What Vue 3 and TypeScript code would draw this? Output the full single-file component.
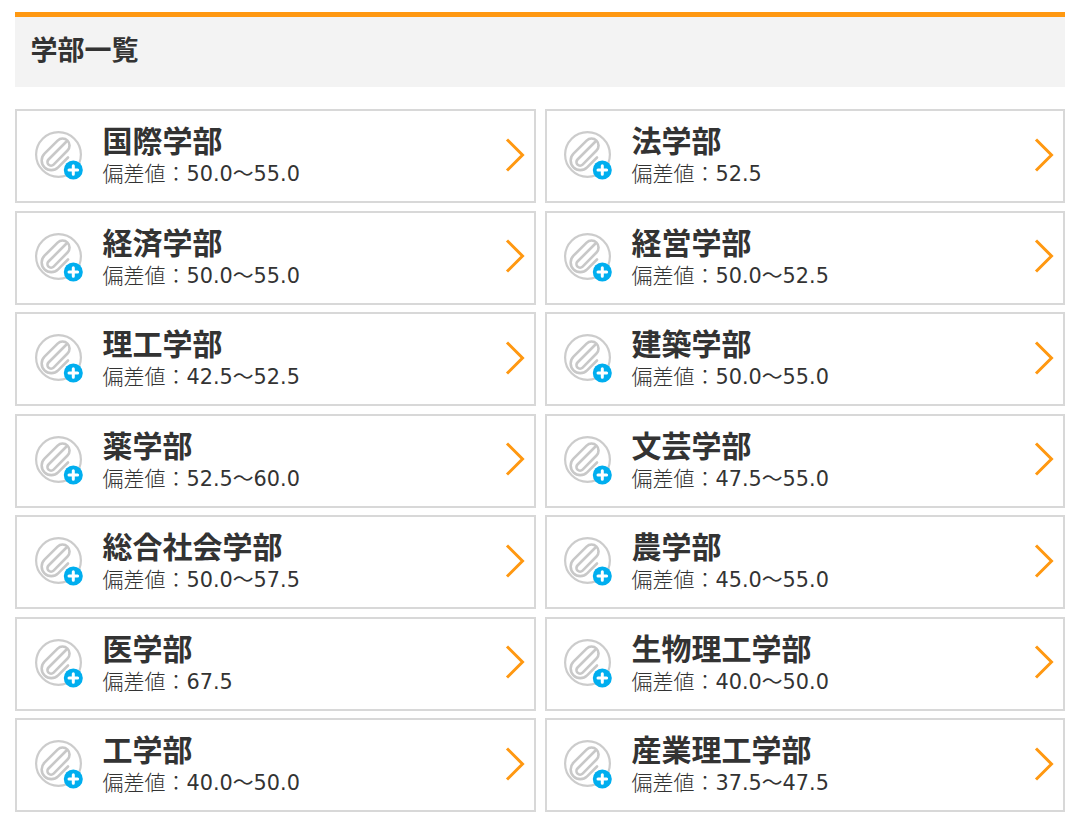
<script setup lang="ts">
interface Dept { name: string; score: string }
const depts: Dept[] = [
  { name: '国際学部', score: '50.0～55.0' },
  { name: '法学部', score: '52.5' },
  { name: '経済学部', score: '50.0～55.0' },
  { name: '経営学部', score: '50.0～52.5' },
  { name: '理工学部', score: '42.5～52.5' },
  { name: '建築学部', score: '50.0～55.0' },
  { name: '薬学部', score: '52.5～60.0' },
  { name: '文芸学部', score: '47.5～55.0' },
  { name: '総合社会学部', score: '50.0～57.5' },
  { name: '農学部', score: '45.0～55.0' },
  { name: '医学部', score: '67.5' },
  { name: '生物理工学部', score: '40.0～50.0' },
  { name: '工学部', score: '40.0～50.0' },
  { name: '産業理工学部', score: '37.5～47.5' },
]
</script>

<template>
  <div class="page">
    <h2 class="head">学部一覧</h2>
    <ul class="grid">
      <li v-for="d in depts" :key="d.name" class="card">
        <svg class="clip" width="50" height="50" viewBox="0 0 50 50" aria-hidden="true">
          <circle cx="23.5" cy="23.5" r="22.4" fill="#fff" stroke="#cccccc" stroke-width="2.2" />
          <path
            d="M31 11 L13.5 28.5 a3.6 3.6 0 0 0 5.1 5.1 L32.5 19.5 a7 7 0 0 0 -9.9 -9.9 L9.5 22.7 a9.6 9.6 0 0 0 13.6 13.6 L33 26.5"
            fill="none"
            stroke="#c8c8c8"
            stroke-width="2.6"
            stroke-linecap="round"
          />
          <circle cx="38.3" cy="39" r="9.5" fill="#00aeef" />
          <path d="M34 39 H42.6 M38.3 34.7 V43.3" stroke="#fff" stroke-width="3" stroke-linecap="round" />
        </svg>
        <div class="text">
          <div class="name">{{ d.name }}</div>
          <div class="score">偏差値：<span class="num">{{ d.score }}</span></div>
        </div>
        <svg class="chev" width="20" height="34" viewBox="0 0 20 34" aria-hidden="true">
          <path d="M2 1.5 L17.5 17 L2 32.5" fill="none" stroke="#ff9811" stroke-width="3" />
        </svg>
      </li>
    </ul>
  </div>
</template>

<style scoped>
.page {
  padding: 12px 14px 14px 15px;
  font-family: "Noto Sans CJK JP", "Noto Sans", sans-serif;
  color: #333;
}
.head {
  margin: 0 0 22px;
  height: 70px;
  border-top: 5px solid #ff9811;
  background: #f3f3f3;
  padding-left: 15.5px;
  font-size: 27px;
  font-weight: 700;
  line-height: 64px;
}
.grid {
  list-style: none;
  margin: 0;
  padding: 0;
  display: grid;
  grid-template-columns: 521px 520.5px;
  column-gap: 8.5px;
  row-gap: 7.5px;
}
.card {
  height: 94px;
  box-sizing: border-box;
  border: 2px solid #d8d8d8;
  display: flex;
  align-items: center;
  padding: 0 9px 0 18px;
}
.card:nth-child(even) {
  padding-left: 17.5px;
}
.clip {
  flex: none;
}
.text {
  flex: 1;
  margin-left: 17.5px;
  margin-top: 2px;
  min-width: 0;
}
.name {
  font-size: 30px;
  font-weight: 700;
  line-height: 32px;
  margin-top: -3px;
}
.score {
  font-size: 21px;
  line-height: 28px;
  font-weight: 300;
  margin-top: 3px;
}
.num {
  font-family: "DejaVu Sans", "Noto Sans CJK JP", sans-serif;
  font-size: 20.8px;
  font-weight: 400;
}
.chev {
  flex: none;
  margin-top: -3px;
}
</style>
